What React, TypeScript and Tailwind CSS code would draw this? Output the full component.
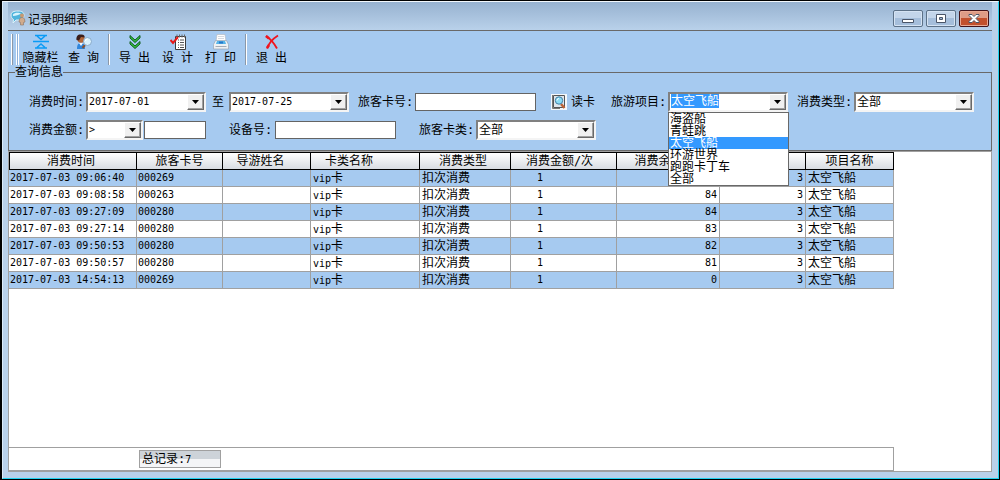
import React, { useEffect, useRef } from "react";
import clsx from "clsx";

const columns = [
    { title: "消费时间", width: "w-[128px]", head: "pr-1", cell: "pl-px text-[10px]" },
    { title: "旅客卡号", width: "w-[86px]", head: "", cell: "pl-px text-[10px]" },
    { title: "导游姓名", width: "w-[88px]", head: "pr-3", cell: "pl-px" },
    { title: "卡类名称", width: "w-[109px]", head: "pr-8", cell: "pl-0.5" },
    { title: "消费类型", width: "w-[91px]", head: "pr-1", cell: "pl-0.5" },
    { title: "消费金额/次", width: "w-[106px]", head: "pr-2", cell: "pl-[26px] text-[10px]" },
    { title: "消费余额/次", width: "w-[103px]", head: "", cell: "pr-0.5 text-right text-[10px]" },
    { title: "", width: "w-[86px]", head: "", cell: "pr-0.5 text-right text-[10px]" },
    { title: "项目名称", width: "w-[88px]", head: "", cell: "pl-0.5" },
];

const records = [
    { time: "2017-07-03 09:06:40", card: "000269", left: "" },
    { time: "2017-07-03 09:08:58", card: "000263", left: "84" },
    { time: "2017-07-03 09:27:09", card: "000280", left: "84" },
    { time: "2017-07-03 09:27:14", card: "000280", left: "83" },
    { time: "2017-07-03 09:50:53", card: "000280", left: "82" },
    { time: "2017-07-03 09:50:57", card: "000280", left: "81" },
    { time: "2017-07-03 14:54:13", card: "000269", left: "0" },
];

const projects = ["海盗船", "青蛙跳", "太空飞船", "环游世界", "跑跑卡丁车", "全部"];

function AppIcon() {
    return (
        <svg viewBox="0 0 16 16" className="size-4">
            <path d="M1 5C1 2 4 1 8 1s6 1.500 6 4-2 5-6 5H6l-3 3 .5-3.500C2 8.500 1 7 1 5z" fill="#4fb4dc" stroke="#d9f2fa" />
            <path d="M3 4.500C4 2.500 9 2 11 3.500 9 5 6 6 3 6z" fill="#d8f3fc" />
            <circle cx="12" cy="5.500" r="2" fill="#c99a72" />
            <path d="M9.500 9c1-2 4-2 5 0l.5 3-1.500.5V15h-3v-2.500L9 12z" fill="#d1ab8c" stroke="#8c7463" strokeWidth=".6" />
        </svg>
    );
}

function HideIcon() {
    return (
        <svg viewBox="0 0 16 16" className="size-4" fill="none" stroke="#0a9bf5" strokeWidth="1.500">
            <path d="M2 1.500h12M0 7.500h16M2 14h12M4 2l4 3.500L12 2M4 13.500 8 10l4 3.500" />
        </svg>
    );
}

function SearchIcon() {
    return (
        <svg viewBox="0 0 16 16" className="size-4">
            <path d="M1 15c0-4 1-6 4-6s4 2 4 6z" fill="#2f86dc" />
            <path d="M3 9l2 3 2-3z" fill="#f4f8ff" />
            <circle cx="5" cy="5" r="3.700" fill="#b3683b" />
            <path d="M.5 6C0 2 2 0 5.500.5 8 .5 9 2 8.500 3.500L5 3 3 6.500z" fill="#3a1e1b" />
            <path d="m9 11-2.500 3" stroke="#8a5233" strokeWidth="2" />
            <circle cx="11.500" cy="7.500" r="4" fill="#d8f0fc" stroke="#88a9c9" />
            <path d="M9.500 7a2 2 0 0 1 2-2" stroke="#fff" strokeWidth="1.200" fill="none" />
        </svg>
    );
}

function ExportIcon() {
    return (
        <svg viewBox="0 0 16 16" className="size-4" strokeLinejoin="miter">
            <path d="M3 1.500 8 6l5-4.500v2.500L8 8.500 3 4z" fill="#2fc03f" stroke="#155f22" />
            <path d="M3 7.500 8 12l5-4.500V10l-5 4.500L3 10z" fill="#2fc03f" stroke="#155f22" />
        </svg>
    );
}

function DesignIcon() {
    return (
        <svg viewBox="0 0 16 16" className="size-4">
            <path d="M5.500 2.500h10v13h-10z" fill="#fff" stroke="#3d3d3d" />
            <path d="M7 .5v3M9.500.5v3M12 .5v3M14.500.5v3" stroke="#666" />
            <path d="M8 6h1m1 0h4M8 8.500h1m1 0h4M8 11h1m1 0h4M8 13.500h1m1 0h4" stroke="#555" />
            <path d="m.5 6 2.500 3L8 3" fill="none" stroke="#e81818" strokeWidth="2" />
        </svg>
    );
}

function PrintIcon() {
    return (
        <svg viewBox="0 0 16 16" className="size-4">
            <path d="M4 .5h8l1 7H3z" fill="#fff" stroke="#b6bcc4" strokeWidth=".7" />
            <path d="M5 2.500h6M5 4.500h6" stroke="#d5d9df" />
            <path d="M2.500 6.500h11l2 4v4.500H.5v-4.500z" fill="#eef1f4" stroke="#9aa5b3" strokeWidth=".7" />
            <path d="M4 7h8l1 3H3z" fill="#56b4e8" />
            <path d="M6 7.500h4v2H6z" fill="#2877c8" />
            <path d="M2.500 12.500h11" stroke="#a5abb5" />
        </svg>
    );
}

function ExitIcon() {
    return (
        <svg viewBox="0 0 16 16" className="size-4" fill="none" stroke="#f0141e">
            <path d="M2 2c3 2 8 7 11 12.500" strokeWidth="1.800" />
            <path d="M14 1.500C10 4 5 9 3 14.500" strokeWidth="1.800" />
            <path d="m2 2 3 2.500M3 14l2-3" strokeWidth="2.600" />
        </svg>
    );
}

function ReadCardIcon() {
    return (
        <svg viewBox="0 0 16 16" className="size-4">
            <path d="M0 0h16v16H0z" fill="#f5f8fb" />
            <path d="M2.500 1.500h11v12h-11z" fill="#dfe6ed" stroke="#555" />
            <path d="M1.500 1v13.500H9" fill="none" stroke="#777" />
            <path d="m10 10 3.500 4" stroke="#bd6437" strokeWidth="2.500" />
            <circle cx="8" cy="6.500" r="3.700" fill="#8bdcf5" stroke="#427fa5" />
            <path d="M6 6.500A2 2 0 0 1 8 4.500" fill="none" stroke="#fff" />
        </svg>
    );
}

const captionButton =
    "flex h-[17px] w-[30px] items-center justify-center rounded-xs border border-[#5c7188] bg-linear-to-b from-[#c3d5ea] from-50% to-[#a5bedb] to-50% shadow-[inset_0_0_0_1px_#d5e3f3]";

function TitleBar() {
    return (
        <header className="flex h-7 items-center gap-0.5 bg-linear-to-b from-[#97b2d0] to-[#b9d1ea] pt-1 pl-0.5">
            <AppIcon />
            <h1 className="flex-1 pt-px font-['Noto_Sans_CJK_SC',sans-serif] text-xs">记录明细表</h1>
            <div className="flex gap-[3px] pr-[3px]">
                <button aria-label="最小化" className={captionButton}>
                    <svg viewBox="0 0 12 11" className="h-[11px] w-3">
                        <path d="M.5 6.500h11v3H.5z" fill="#fff" stroke="#4a5568" />
                    </svg>
                </button>
                <button aria-label="最大化" className={captionButton}>
                    <svg viewBox="0 0 12 11" className="h-[11px] w-3">
                        <path d="M1.500 1.500h9v8h-9z" fill="#fff" stroke="#4a5568" />
                        <path d="M4.500 4.500h3v2h-3z" fill="#9db6d3" stroke="#4a5568" />
                    </svg>
                </button>
                <button
                    aria-label="关闭"
                    className="flex h-[17px] w-[30px] items-center justify-center rounded-xs border border-[#43141a] bg-linear-to-b from-[#de9c86] from-50% to-[#c2502c] to-50% shadow-[inset_0_0_0_1px_#e9a993]"
                >
                    <svg viewBox="0 0 12 11" className="h-[11px] w-3">
                        <path d="M1 1.500h3l2 2 2-2h3v1l-3 3 3 3v1H8l-2-2-2 2H1v-1l3-3-3-3z" fill="#fff" stroke="#4a5568" />
                    </svg>
                </button>
            </div>
        </header>
    );
}

function ToolButton({ icon, children }: { icon: React.ReactNode; children: React.ReactNode }) {
    return (
        <button className="flex w-[43px] flex-col items-center gap-px leading-[14px] whitespace-nowrap">
            {icon}
            {children}
        </button>
    );
}

function Separator() {
    return <div className="mx-[3px] h-[31px] w-0.5 border-l border-[#8b98a8] bg-white" />;
}

function Toolbar() {
    return (
        <div className="flex h-9 border-t border-[#696969] pt-[3px]">
            <div className="flex gap-[3px] pl-[3px]">
                <div className="h-[31px] w-0.5 border-r border-[#8b98a8] bg-white" />
                <div className="h-[31px] w-[3px] border-x border-white bg-[#8fb0d8]" />
            </div>
            <ToolButton icon={<HideIcon />}>隐藏栏</ToolButton>
            <ToolButton icon={<SearchIcon />}>查 询</ToolButton>
            <Separator />
            <ToolButton icon={<ExportIcon />}>导 出</ToolButton>
            <ToolButton icon={<DesignIcon />}>设 计</ToolButton>
            <ToolButton icon={<PrintIcon />}>打 印</ToolButton>
            <Separator />
            <ToolButton icon={<ExitIcon />}>退 出</ToolButton>
        </div>
    );
}

function Arrow() {
    return (
        <span className="pointer-events-none absolute top-0 right-0 flex h-4 w-[17px] items-center justify-center border border-t-white border-r-[#696969] border-b-[#696969] border-l-white bg-[#f0f0f0] shadow-[inset_-1px_-1px_0_#a0a0a0]">
            <svg viewBox="0 0 7 4" className="h-1 w-[7px]">
                <path d="M0 0h7L3.500 4z" />
            </svg>
        </span>
    );
}

const sunken =
    "relative h-5 border-2 border-t-[#808080] border-r-[#f4f4f4] border-b-[#f4f4f4] border-l-[#808080] bg-white";

function Combo({ id, value, className }: { id: string; value: string; className?: string }) {
    return (
        <div className={clsx(sunken, className ?? "w-[120px]")}>
            <select id={id} defaultValue={value} className="block h-4 w-full appearance-none pl-px leading-[14px] outline-none">
                <option>{value}</option>
            </select>
            <Arrow />
        </div>
    );
}

function ProjectCombo() {
    const ref = useRef<HTMLInputElement>(null);

    useEffect(() => {
        ref.current?.focus();
        ref.current?.select();
    }, []);

    return (
        <div className={clsx(sunken, "w-[120px]")}>
            <input
                id="project"
                ref={ref}
                role="combobox"
                aria-expanded="true"
                aria-controls="project-list"
                defaultValue="太空飞船"
                className="block h-[14px] w-full pl-px leading-[14px] caret-transparent outline-none selection:bg-[#3399ff] selection:text-white"
            />
            <Arrow />
            <ul
                id="project-list"
                role="listbox"
                className="absolute top-[18px] -left-0.5 z-10 w-[121px] border border-[#696969] bg-white leading-3"
            >
                {projects.map((name) => (
                    <li
                        key={name}
                        role="option"
                        aria-selected={name === "太空飞船"}
                        className={clsx("pl-px", name === "太空飞船" && "bg-[#3399ff] text-white")}
                    >
                        {name}
                    </li>
                ))}
            </ul>
        </div>
    );
}

function TextBox({ id, className }: { id: string; className: string }) {
    return <input id={id} type="text" className={clsx("h-[18px] border border-[#646464] bg-white px-0.5 outline-none", className)} />;
}

function Label({ htmlFor, children }: { htmlFor: string; children: React.ReactNode }) {
    return (
        <label htmlFor={htmlFor} className="w-[57px] shrink-0 whitespace-nowrap">
            {children}
        </label>
    );
}

function QueryPanel() {
    return (
        <fieldset className="min-w-0 border border-[#696969] pb-[10px] pl-5">
            <legend className="-ml-[14px] leading-3">查询信息</legend>
            <div className="flex items-center pt-[14px] whitespace-nowrap">
                <Label htmlFor="from">消费时间:</Label>
                <Combo id="from" value="2017-07-01" className="w-[120px] text-[10px]" />
                <label htmlFor="to" className="mr-[5px] ml-1.5">至</label>
                <Combo id="to" value="2017-07-25" className="mr-[9px] w-[120px] text-[10px]" />
                <Label htmlFor="card">旅客卡号:</Label>
                <TextBox id="card" className="w-[121px]" />
                <button className="mr-4 ml-[15px] flex items-center gap-1">
                    <ReadCardIcon />
                    读卡
                </button>
                <Label htmlFor="project">旅游项目:</Label>
                <ProjectCombo />
                <div className="w-[9px]" />
                <Label htmlFor="type">消费类型:</Label>
                <Combo id="type" value="全部" />
            </div>
            <div className="flex items-center pt-2 whitespace-nowrap">
                <Label htmlFor="amount-op">消费金额:</Label>
                <Combo id="amount-op" value=">" className="w-[57px] text-[10px]" />
                <input
                    type="text"
                    aria-label="金额"
                    className="mr-[23px] ml-px h-[18px] w-[62px] border border-[#646464] bg-white px-0.5 outline-none"
                />
                <label htmlFor="device" className="w-[46px]">设备号:</label>
                <TextBox id="device" className="mr-[23px] w-[121px]" />
                <Label htmlFor="card-type">旅客卡类:</Label>
                <Combo id="card-type" value="全部" />
            </div>
        </fieldset>
    );
}

function RecordTable() {
    return (
        <table className="w-[885px] table-fixed border-separate border-spacing-0 text-left leading-[14px] whitespace-nowrap">
            <thead>
                <tr>
                    {columns.map((col, i) => (
                        <th
                            key={i}
                            className={clsx(
                                "h-[18px] border-y border-r border-black bg-linear-to-b from-white to-[#d8dce2] py-0 text-center font-normal first:border-l",
                                col.width,
                                col.head,
                            )}
                        >
                            {col.title}
                        </th>
                    ))}
                </tr>
            </thead>
            <tbody>
                {records.map((r) => {
                    const cells = [
                        r.time,
                        r.card,
                        "",
                        <><span className="text-[10px]">vip</span>卡</>,
                        "扣次消费",
                        "1",
                        r.left,
                        "3",
                        "太空飞船",
                    ];
                    return (
                        <tr key={r.time} className="odd:bg-[#a6caf0]">
                            {cells.map((cell, i) => (
                                <td key={i} className={clsx("h-[17px] overflow-hidden border-r border-b border-[#a0a0a0] py-0", columns[i].cell)}>
                                    {cell}
                                </td>
                            ))}
                        </tr>
                    );
                })}
            </tbody>
        </table>
    );
}

export default function App() {
    return (
        <div className="flex min-h-screen flex-col border border-l-2 border-black bg-[#b9d1ea] font-['DejaVu_Sans_Mono','Noto_Sans_CJK_SC',monospace] text-xs text-black">
            <div className="flex flex-1 flex-col border border-t-[#f2f7fc] border-r-[#22d3f0] border-b-[#22d3f0] border-l-[#dcebf8] pr-1.5 pb-1.5 pl-[5px]">
                <TitleBar />
                <main className="flex flex-1 flex-col bg-[#a6caf0]">
                    <Toolbar />
                    <QueryPanel />
                    <section className="flex flex-1 flex-col border border-[#a0a0a0] bg-white">
                        <RecordTable />
                        <div className="mt-auto flex w-[885px] border-y border-r border-[#a0a0a0] py-0.5 pl-[130px]">
                            <div className="h-[18px] w-[82px] border border-[#a0a0a0] bg-linear-to-b from-[#cdd3d9] from-50% to-[#f4f5f7] to-50% pl-0.5 leading-4">
                                总记录:<span className="text-[10px]">7</span>
                            </div>
                        </div>
                    </section>
                </main>
            </div>
        </div>
    );
}
